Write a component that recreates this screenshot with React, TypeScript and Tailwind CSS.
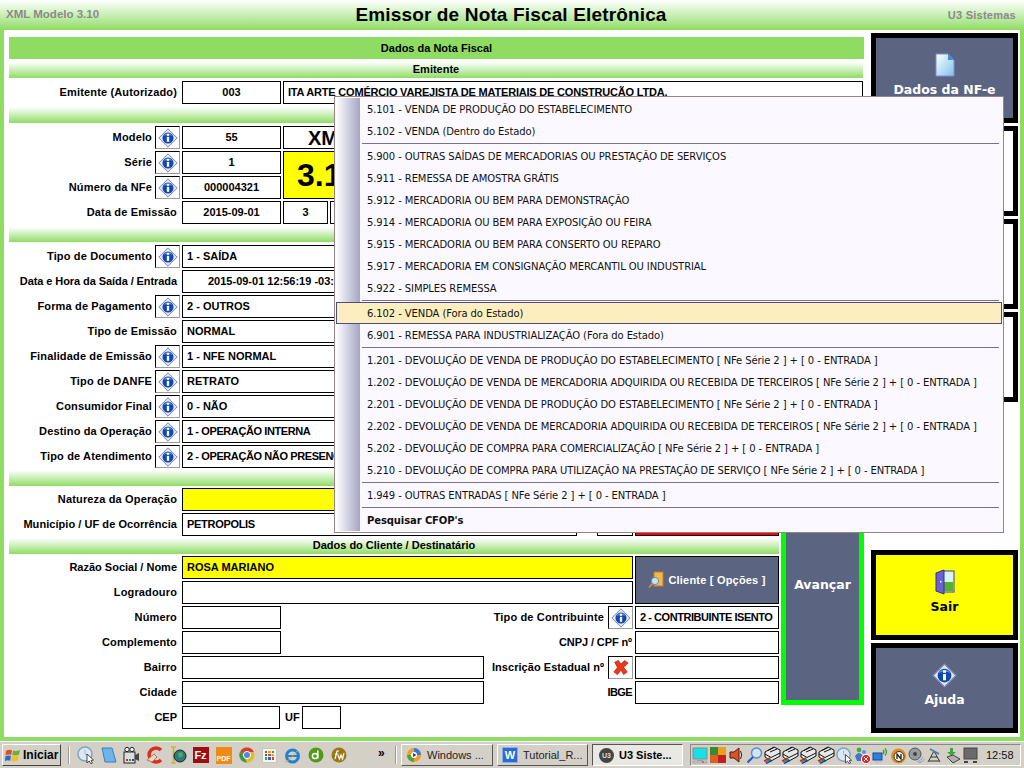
import type { ReactNode } from "react";

const sans = "font-['Liberation_Sans',Arial,sans-serif]";

function InfoIcon({ size = 20 }: { size?: number }) {
  return (
    <svg width={size} height={size} viewBox="0 0 24 24">
      <path d="M12 1 L23 12 L12 23 L1 12 Z" fill="#dfe5f2" stroke="#8088a4" strokeWidth="1.2" />
      <circle cx="12" cy="12" r="6.6" fill="#0f48b0" />
      <path d="M6.5 9.5 A6.4 6.4 0 0 1 17.5 9.5 Q12 7.5 6.5 9.5 Z" fill="#5d8fe0" />
      <rect x="10.6" y="10.6" width="2.8" height="6" fill="#fff" />
      <rect x="10.6" y="7" width="2.8" height="2.4" fill="#fff" />
    </svg>
  );
}

function IconButton({ children }: { children?: ReactNode }) {
  return (
    <div className="w-[25px] h-[23px] bg-white border border-black border-r-[#9a9a9a] border-b-[#9a9a9a] flex items-center justify-center shrink-0">
      {children ?? <InfoIcon />}
    </div>
  );
}

function RedX() {
  return (
    <svg width="16" height="17" viewBox="0 0 18 18">
      <path d="M2 3 L6 1 L9 5 L13 1 L17 4 L12 9 L16 14 L12 17 L9 12 L5 17 L1 14 L5 9 Z" fill="#e8391c" stroke="#b02010" strokeWidth="0.8" />
    </svg>
  );
}

function Box({ w, className = "", children }: { w: string; className?: string; children?: ReactNode }) {
  return (
    <div className={`${w} h-[23px] shrink-0 border border-black flex items-center px-1 font-bold text-[11px] text-black whitespace-nowrap overflow-hidden ${className || "bg-white"}`}>
      {children}
    </div>
  );
}

function Row({ label, info, labelClass = "tracking-[0.15px]", children }: { label: string; info?: boolean; labelClass?: string; children: ReactNode }) {
  return (
    <div className="flex h-[23px] items-center">
      <div className={`${info ? "w-[143px]" : "w-[168px]"} text-right font-bold text-[11px] text-black whitespace-nowrap ${labelClass}`}>{label}</div>
      {info ? (
        <div className="ml-[3px] mr-[2px]">
          <IconButton />
        </div>
      ) : (
        <div className="w-[5px]" />
      )}
      {children}
    </div>
  );
}

function Bar({ children, className = "h-[16px]" }: { children?: ReactNode; className?: string }) {
  return (
    <div className={`bg-linear-to-b from-white to-[#8fdc62] flex items-center justify-center pb-px font-bold text-[11px] text-black ${className}`}>
      {children}
    </div>
  );
}

function DocIcon() {
  return (
    <svg width="20" height="24" viewBox="0 0 20 24">
      <defs>
        <linearGradient id="docg" x1="0" y1="0" x2="1" y2="1">
          <stop offset="0" stopColor="#ffffff" />
          <stop offset="1" stopColor="#7fc0ee" />
        </linearGradient>
      </defs>
      <path d="M1 1 H13 L19 7 V23 H1 Z" fill="url(#docg)" stroke="#7f8fd0" />
      <path d="M13 1 L19 7 H13 Z" fill="#3f8fe0" />
    </svg>
  );
}

function DoorIcon() {
  return (
    <svg width="20" height="26" viewBox="0 0 20 26">
      <rect x="7" y="2" width="12" height="21" fill="#d8f4f4" stroke="#3c3c9c" />
      <rect x="8" y="13" width="10" height="9" fill="#58b030" />
      <path d="M1 4 L9 1 V25 L1 22 Z" fill="#6a60d8" stroke="#30308c" />
      <rect x="5" y="12" width="1.5" height="1.5" fill="#fff" />
    </svg>
  );
}

function ClientIcon() {
  return (
    <svg width="16" height="18" viewBox="0 0 16 18">
      <rect x="6" y="1" width="9" height="14" fill="#f2b84a" stroke="#c08020" />
      <circle cx="7" cy="10" r="3.6" fill="#bfe4f8" stroke="#7a8aa0" />
      <path d="M4.5 12.5 L1 16.5" stroke="#d89040" strokeWidth="1.6" />
    </svg>
  );
}

function SideButton({ className = "", icon, label, text = "text-white", mt = "" }: { className?: string; icon?: ReactNode; label?: string; text?: string; mt?: string }) {
  return (
    <div className={`w-[147px] h-[90px] border-[5px] border-black flex flex-col items-center pt-[14px] ${className} ${mt}`}>
      <div className="h-[26px] flex items-center">{icon}</div>
      {label && <div className={`mt-[3px] font-['DejaVu_Sans',sans-serif] font-bold text-[12.5px] ${text}`}>{label}</div>}
    </div>
  );
}

const menu: (string | null)[] = [
  "5.101 - VENDA DE PRODUÇÃO DO ESTABELECIMENTO",
  "5.102 - VENDA (Dentro do Estado)",
  null,
  "5.900 - OUTRAS SAÍDAS DE MERCADORIAS OU PRESTAÇÃO DE SERVIÇOS",
  "5.911 - REMESSA DE AMOSTRA GRÁTIS",
  "5.912 - MERCADORIA OU BEM PARA DEMONSTRAÇÃO",
  "5.914 - MERCADORIA OU BEM PARA EXPOSIÇÃO OU FEIRA",
  "5.915 - MERCADORIA OU BEM PARA CONSERTO OU REPARO",
  "5.917 - MERCADORIA EM CONSIGNAÇÃO MERCANTIL OU INDUSTRIAL",
  "5.922 - SIMPLES REMESSA",
  null,
  "6.102 - VENDA (Fora do Estado)",
  "6.901 - REMESSA PARA INDUSTRIALIZAÇÃO (Fora do Estado)",
  null,
  "1.201 - DEVOLUÇÃO DE VENDA DE PRODUÇÃO DO ESTABELECIMENTO [ NFe Série 2 ] + [ 0 - ENTRADA ]",
  "1.202 - DEVOLUÇÃO DE VENDA DE MERCADORIA ADQUIRIDA OU RECEBIDA DE TERCEIROS [ NFe Série 2 ] + [ 0 - ENTRADA ]",
  "2.201 - DEVOLUÇÃO DE VENDA DE PRODUÇÃO DO ESTABELECIMENTO [ NFe Série 2 ] + [ 0 - ENTRADA ]",
  "2.202 - DEVOLUÇÃO DE VENDA DE MERCADORIA ADQUIRIDA OU RECEBIDA DE TERCEIROS [ NFe Série 2 ] + [ 0 - ENTRADA ]",
  "5.202 - DEVOLUÇÃO DE COMPRA PARA COMERCIALIZAÇÃO [ NFe Série 2 ] + [ 0 - ENTRADA ]",
  "5.210 - DEVOLUÇÃO DE COMPRA PARA UTILIZAÇÃO NA PRESTAÇÃO DE SERVIÇO [ NFe Série 2 ] + [ 0 - ENTRADA ]",
  null,
  "1.949 - OUTRAS ENTRADAS [ NFe Série 2 ] + [ 0 - ENTRADA ]",
  null,
];

function Menu() {
  return (
    <div className="absolute left-[334px] top-[96px] w-[670px] h-[437px] border border-[#958585] bg-[#fbf9ff] p-px flex font-['DejaVu_Sans',sans-serif] text-[10px] tracking-[-0.1px] text-[#111]">
      <div className="w-[24px] shrink-0 bg-linear-to-r from-white to-[#a5a5c5]" />
      <div className="flex-1 flex flex-col">
        {menu.map((item, i) =>
          item === null ? (
            <div key={i} className="h-[3px] shrink-0 flex items-center pl-[2px] pr-[3px]">
              <div className="h-px w-full bg-[#7a7090]" />
            </div>
          ) : item.startsWith("6.102") ? (
            <div key={i} className="h-[22px] shrink-0 -ml-[24px] relative flex items-center pl-[30px] bg-[#fdeebf] border border-[#4a5078]">
              {item}
            </div>
          ) : (
            <div key={i} className="h-[22px] shrink-0 flex items-center pl-[7px] whitespace-nowrap">
              {item}
            </div>
          )
        )}
        <div className="h-[22px] shrink-0 flex items-center pl-[7px] font-bold">Pesquisar CFOP's</div>
      </div>
    </div>
  );
}

function ClockCursor({ s = 18 }: { s?: number }) {
  return (
    <svg width={s} height={s} viewBox="0 0 18 18">
      <circle cx="8" cy="8" r="7" fill="#dce8f2" stroke="#7aa4c8" strokeWidth="1.5" />
      <path d="M8 3.5 V8 L11 10" fill="none" stroke="#9ab8d0" />
      <path d="M10 8 V17 L12.2 15 L14 17.8 L15.4 17 L14 14.4 L16.5 14 Z" fill="#fff" stroke="#222" strokeWidth="0.8" />
    </svg>
  );
}

const PrinterIcon = () => (
  <svg width="18" height="18" viewBox="0 0 18 18">
    <path d="M2 6 L11 1 L17 4 L17 10 L8 15 L2 11 Z" fill="#e8e8e8" stroke="#111" />
    <path d="M5 4.5 L11 1.5 M7 6 L14 3 M2 8 L8 11.5 L17 7" fill="none" stroke="#111" />
    <path d="M1 15 L7 12" stroke="#e02020" strokeWidth="1.5" />
    <path d="M2 16.2 L8 13.2" stroke="#20a020" strokeWidth="1.5" />
    <path d="M3 17.4 L9 14.4" stroke="#2030d0" strokeWidth="1.5" />
  </svg>
);

const quickIcons: ReactNode[] = [
  <ClockCursor key="a" />,
  <svg key="b" width="16" height="17" viewBox="0 0 16 17"><path d="M1 1 H11 L15 15 H4 Z" fill="#6db4e8" stroke="#3a80b8" /></svg>,
  <svg key="c" width="17" height="18" viewBox="0 0 17 18"><rect x="1" y="6" width="11" height="11" fill="#ddd" stroke="#222" /><circle cx="4" cy="3.5" r="2.2" fill="#eee" stroke="#222" /><circle cx="9" cy="3.5" r="2.2" fill="#eee" stroke="#222" /><path d="M12 9 L16 7 V15 L12 13 Z" fill="#444" /><rect x="3" y="13" width="2" height="2" fill="#e02020" /><rect x="6" y="13" width="2" height="2" fill="#20a040" /><rect x="9" y="13" width="2" height="2" fill="#2040d0" /></svg>,
  <svg key="d" width="18" height="18" viewBox="0 0 18 18"><path d="M15 4 A7 7 0 1 0 15 14" fill="none" stroke="#d83020" strokeWidth="3.5" /><path d="M1 14 L8 8 L11 11 L6 16 Z" fill="#f0d8b0" stroke="#a08060" /></svg>,
  <svg key="e" width="18" height="18" viewBox="0 0 18 18"><path d="M2 1 H7 M4.5 1 V17 M2 17 H7" stroke="#c8b820" strokeWidth="1.6" fill="none" /><circle cx="11" cy="10" r="6" fill="#2a7a80" stroke="#222" /><path d="M9 7 L13 6 L14 10 L10 12 Z" fill="#58a858" /></svg>,
  <div key="f" className="w-[16px] h-[16px] bg-[#a00d10] text-white text-[11px] leading-[16px] font-bold text-center font-['Liberation_Sans',sans-serif]">Fz</div>,
  <div key="g" className="w-[16px] h-[17px] bg-[#ef8a14] text-white text-[7px] leading-[8px] pt-[8px] font-bold text-center font-['Liberation_Sans',sans-serif]">PDF</div>,
  <svg key="h" width="16" height="16" viewBox="0 0 16 16"><circle cx="8" cy="8" r="7.5" fill="#e8b820" /><path d="M8 .5 A7.5 7.5 0 0 1 14.8 5 H8 Z M1.5 4 A7.5 7.5 0 0 1 8 .5 L8 5 L5 9 Z" fill="#d83a2a" /><path d="M1.5 4 L5 10 L8 15.5 A7.5 7.5 0 0 1 1.5 4 Z" fill="#3a9a40" /><circle cx="8" cy="8" r="3.6" fill="#4a8ae0" stroke="#fff" /></svg>,
  <div key="i" className="w-[15px] h-[15px] bg-[#f4f4f0] border border-[#c8c8c0] grid grid-cols-3 gap-px p-[2px]">
    <i className="bg-[#e04020]" /><i className="bg-[#f0a020]" /><i className="bg-[#40a040]" /><i className="bg-[#2060d0]" /><i className="bg-[#e04020]" /><i className="bg-[#f0a020]" /><i className="bg-[#40a040]" /><i className="bg-[#2060d0]" /><i className="bg-[#e04020]" />
  </div>,
  <svg key="j" width="17" height="17" viewBox="0 0 17 17"><circle cx="8.5" cy="9" r="6" fill="none" stroke="#1f80d8" strokeWidth="3" /><rect x="3" y="8" width="11" height="2" fill="#1f80d8" /><path d="M1 15 Q4 15 14 3" fill="none" stroke="#e0b030" strokeWidth="1" /></svg>,
  <svg key="k" width="16" height="16" viewBox="0 0 16 16"><circle cx="8" cy="8" r="7.5" fill="#4f9a18" /><circle cx="7" cy="9" r="2.6" fill="none" stroke="#fff" strokeWidth="1.5" /><path d="M9.8 3.5 V11.5" stroke="#fff" strokeWidth="1.5" /></svg>,
  <svg key="l" width="16" height="16" viewBox="0 0 16 16"><circle cx="8" cy="8" r="7.5" fill="#9a7614" /><path d="M4 12 L6 4 H8 M4 7 H7.5 M7 8 L8.5 12 L10 8 L11.5 12 L13 6" fill="none" stroke="#fff" strokeWidth="1.2" /></svg>,
];

const trayIcons: ReactNode[] = [
  <svg key="a" width="16" height="17" viewBox="0 0 16 17"><rect x="1" y="1" width="14" height="11" fill="#18e0e8" stroke="#888" /><rect x="5" y="12" width="6" height="2" fill="#aaa" /><rect x="1" y="14" width="14" height="2" fill="#c8c8c8" stroke="#888" strokeWidth=".5" /><rect x="10" y="14.5" width="2" height="1" fill="#e02020" /></svg>,
  <svg key="b" width="16" height="16" viewBox="0 0 16 16"><rect x="0" y="0" width="8" height="8" fill="#3a8a30" /><rect x="8" y="0" width="8" height="8" fill="#e8a020" /><rect x="0" y="8" width="8" height="8" fill="#e06020" /><rect x="8" y="8" width="8" height="8" fill="#c02020" /></svg>,
  <svg key="c" width="15" height="16" viewBox="0 0 15 16"><path d="M1 5 H5 L10 1 V15 L5 11 H1 Z" fill="#e05028" stroke="#402010" /><path d="M11.5 4 Q14 8 11.5 12" fill="none" stroke="#402010" /></svg>,
  <svg key="d" width="17" height="17" viewBox="0 0 17 17"><circle cx="10.5" cy="6" r="5" fill="#cfe6fa" stroke="#5a8ad0" strokeWidth="1.4" /><path d="M7 10 L1.5 15.5" stroke="#3058c0" strokeWidth="2.2" /></svg>,
  <PrinterIcon key="e" />,
  <PrinterIcon key="f" />,
  <PrinterIcon key="g" />,
  <PrinterIcon key="h" />,
  <ClockCursor key="i" s={17} />,
  <svg key="j" width="17" height="17" viewBox="0 0 17 17"><circle cx="5" cy="3" r="2.4" fill="#48a848" /><path d="M1 9 Q5 3 9 9 L7 14 H3 Z" fill="#3a78c8" /><circle cx="10" cy="5" r="2" fill="#5898d8" /><circle cx="12" cy="12" r="4.6" fill="#e02828" stroke="#fff" /><path d="M10 10 L14 14 M14 10 L10 14" stroke="#fff" /></svg>,
  <svg key="k" width="17" height="17" viewBox="0 0 17 17"><rect x="1" y="6" width="9" height="7" fill="#2f80e0" stroke="#1a4a90" /><rect x="3" y="14" width="7" height="2" fill="#b8c8d8" /><path d="M11 3 Q13 5 11 7 M13 1.5 Q16 5 13 8.5" fill="none" stroke="#28a028" strokeWidth="1.2" /></svg>,
  <svg key="l" width="17" height="17" viewBox="0 0 17 17"><circle cx="8.5" cy="9" r="7.5" fill="#e88a18" /><circle cx="9" cy="9.5" r="5" fill="#f4f0e4" stroke="#333" /><path d="M7 12 V7 L11 12 V7" fill="none" stroke="#222" strokeWidth="1.3" /></svg>,
  <svg key="m" width="17" height="17" viewBox="0 0 17 17"><circle cx="7" cy="7" r="6" fill="#9a9a9a" stroke="#555" /><circle cx="7" cy="7" r="2" fill="#444" /><path d="M9 15 Q13 14 15 10 M11 16 Q15 15 16.5 12" fill="none" stroke="#8a98d0" /></svg>,
  <svg key="n" width="17" height="16" viewBox="0 0 17 16"><path d="M8 4 L2 15 M8 4 L14 15 M5 10 H11 M3 14 H13" fill="none" stroke="#333" /><path d="M4 2 L13 7" stroke="#5a78b0" strokeWidth="2" /></svg>,
  <svg key="o" width="17" height="17" viewBox="0 0 17 17"><path d="M6 1 V5 H3 L7.5 9 L12 5 H9 V1 Z" fill="#3aa83a" /><path d="M3 10 L9 8 L16 12 L9 16 Z" fill="#b0b0b0" stroke="#444" /></svg>,
  <svg key="p" width="15" height="17" viewBox="0 0 15 17"><rect x="1" y="1" width="13" height="11" fill="#6a6a6a" stroke="#444" /><rect x="1" y="14" width="4" height="2" fill="#444" /><rect x="10" y="14" width="4" height="2" fill="#444" /></svg>,
];

function TaskButton({ w, pressed, icon, label }: { w: string; pressed?: boolean; icon: ReactNode; label: string }) {
  return (
    <div
      className={`${w} h-[22px] shrink-0 flex items-center gap-[5px] pl-[4px] text-[11px] whitespace-nowrap border ${
        pressed
          ? "border-t-[#555] border-l-[#555] border-r-white border-b-white bg-[#eae8e2] font-bold text-black"
          : "border-t-white border-l-white border-r-[#555] border-b-[#555] text-[#222]"
      }`}
    >
      {icon}
      <span>{label}</span>
    </div>
  );
}

function Taskbar() {
  return (
    <div className={`h-[27px] bg-[#d4d0c8] border-t border-white flex items-center ${sans}`}>
      <div className="ml-[2px] w-[59px] h-[22px] flex items-center gap-[2px] pl-[2px] border border-t-white border-l-white border-r-[#444] border-b-[#444] font-bold text-[12px] text-black shrink-0">
        <svg width="16" height="15" viewBox="0 0 16 15">
          <path d="M1 3 Q4 1 7 2.5 L6.2 7 Q3.5 6 0.5 7.5 Z" fill="#e0501c" />
          <path d="M8 2.5 Q11 4 15 2 L14 6.8 Q10.5 8 7.2 7 Z" fill="#6cb030" />
          <path d="M0.3 8.5 Q3.5 7 6 8 L5.2 12.8 Q2.5 11.5 0 13 Z" fill="#2a68d8" />
          <path d="M7 8 Q10.5 9 13.8 7.8 L13 12.6 Q9.5 14 6.2 13 Z" fill="#f0c020" />
        </svg>
        Iniciar
      </div>
      <div className="ml-[7px] w-[2px] h-[18px] border-l border-[#999] bg-white shrink-0" />
      <div className="ml-[4px] w-[276px] flex shrink-0">
        {quickIcons.map((icon, i) => (
          <div key={i} className="w-[23px] flex justify-center items-center shrink-0">
            {icon}
          </div>
        ))}
      </div>
      <div className="ml-[28px] w-[12px] font-bold text-[12px] -mt-[4px] shrink-0">»</div>
      <div className="ml-[5px] w-[2px] h-[18px] border-l border-[#999] bg-white shrink-0" />
      <div className="ml-[4px] flex gap-[4px] items-center">
        <TaskButton
          w="w-[92px]"
          label="Windows ..."
          icon={
            <svg width="16" height="16" viewBox="0 0 16 16">
              <circle cx="8" cy="8" r="7" fill="#f0a020" />
              <path d="M8 1 A7 7 0 0 1 15 8 H8 Z" fill="#3a78d8" />
              <path d="M8 15 A7 7 0 0 1 1 8 H8 Z" fill="#48a838" />
              <circle cx="8" cy="8" r="3" fill="#fff" />
              <path d="M7 6 L10.5 8 L7 10 Z" fill="#2040a0" />
            </svg>
          }
        />
        <TaskButton
          w="w-[91px]"
          label="Tutorial_R..."
          icon={<div className="w-[16px] h-[16px] bg-[#2a6ad8] border border-[#8ab0e8] text-white font-bold text-[11px] leading-[14px] text-center">W</div>}
        />
        <TaskButton
          w="w-[91px]"
          pressed
          label="U3 Siste..."
          icon={<div className="w-[15px] h-[15px] rounded-full bg-[#444] text-[#ddd] font-bold text-[7px] leading-[15px] text-center ml-[2px]">U3</div>}
        />
      </div>
      <div className="ml-[7px] flex-1 h-[22px] mr-[3px] border border-t-[#888] border-l-[#888] border-r-white border-b-white flex items-center">
        {trayIcons.map((icon, i) => (
          <div key={i} className="w-[18px] flex justify-center items-center shrink-0">
            {icon}
          </div>
        ))}
        <div className="ml-[7px] text-[11px] text-[#111]">12:58</div>
      </div>
    </div>
  );
}

export default function App() {
  return (
    <div className={`relative w-[1024px] h-[768px] overflow-hidden flex flex-col bg-white ${sans}`}>
      <header className="h-[30px] shrink-0 bg-linear-to-b from-white to-[#8fdc62] flex items-center justify-between pl-[6px] pr-[8px]">
        <div className="w-[200px] font-bold text-[11.5px] text-[#8a8a8a]">XML Modelo 3.10</div>
        <div className="font-bold text-[19px] tracking-[0.15px] text-black">Emissor de Nota Fiscal Eletrônica</div>
        <div className="w-[200px] text-right font-bold text-[11px] tracking-[0.25px] text-[#8a8a8a]">U3 Sistemas</div>
      </header>

      <main className="h-[711px] shrink-0 border-x-4 border-b-4 border-[#8fdc62] bg-white flex items-start">
        <div className="ml-[5px] mt-[7px] w-[855px] shrink-0 flex flex-col">
          <div className="h-[22px] bg-[#8fdc62] flex items-center justify-center font-bold text-[11px] text-black">Dados da Nota Fiscal</div>
          <Bar className="h-[16px] mt-[3px] mr-px">Emitente</Bar>
          <div className="mt-[3px]">
            <Row label="Emitente (Autorizado)">
              <Box w="w-[99px]" className="bg-white justify-center">003</Box>
              <Box w="w-[580px]" className="bg-white ml-[2px] tracking-[-0.2px]">ITA ARTE COMÉRCIO VAREJISTA DE MATERIAIS DE CONSTRUÇÃO LTDA.</Box>
            </Row>
          </div>
          <Bar className="h-[16px] mt-[3px] mr-px" />

          <div className="mt-[3px] flex">
            <div className="flex flex-col gap-[2px]">
              <Row label="Modelo" info><Box w="w-[99px]" className="bg-white justify-center">55</Box></Row>
              <Row label="Série" info><Box w="w-[99px]" className="bg-white justify-center">1</Box></Row>
              <Row label="Número da NFe" info><Box w="w-[99px]" className="bg-white justify-center">000004321</Box></Row>
            </div>
            <div className="ml-[2px] flex-1 flex flex-col gap-[2px]">
              <div className="h-[23px] border border-black flex items-center pl-[24px] font-bold text-[20px]">XML</div>
              <div className="h-[48px] border border-black bg-[#ffff00] flex items-center pl-[13px] font-bold text-[32px]">3.10</div>
            </div>
          </div>
          <div className="mt-[2px]">
            <Row label="Data de Emissão">
              <Box w="w-[99px]" className="bg-white justify-center">2015-09-01</Box>
              <Box w="w-[45px]" className="bg-white justify-center ml-[2px]">3</Box>
              <Box w="w-[100px]" className="bg-white ml-[2px]" />
            </Row>
          </div>
          <Bar className="h-[15px] mt-[3px] mr-px" />

          <div className="mt-[3px] flex">
            <div className="w-[770px] shrink-0 flex flex-col gap-[2px]">
              <Row label="Tipo de Documento" info><Box w="w-[597px]" className="bg-white">1 - SAÍDA</Box></Row>
              <Row label="Data e Hora da Saída / Entrada" labelClass="tracking-[-0.08px]"><Box w="w-[597px]" className="bg-white pl-[25px]">2015-09-01 12:56:19 -03:00</Box></Row>
              <Row label="Forma de Pagamento" info><Box w="w-[597px]" className="bg-white">2 - OUTROS</Box></Row>
              <Row label="Tipo de Emissão"><Box w="w-[597px]" className="bg-white">NORMAL</Box></Row>
              <Row label="Finalidade de Emissão" info><Box w="w-[597px]" className="bg-white">1 - NFE NORMAL</Box></Row>
              <Row label="Tipo de DANFE" info><Box w="w-[597px]" className="bg-white">RETRATO</Box></Row>
              <Row label="Consumidor Final" info><Box w="w-[597px]" className="bg-white">0 - NÃO</Box></Row>
              <Row label="Destino da Operação" info><Box w="w-[597px]" className="bg-white tracking-[-0.4px]">1 - OPERAÇÃO INTERNA</Box></Row>
              <Row label="Tipo de Atendimento" info><Box w="w-[597px]" className="bg-white tracking-[-0.4px]">2 - OPERAÇÃO NÃO PRESENCIAL</Box></Row>
              <Bar className="h-[16px]" />
              <Row label="Natureza da Operação"><Box w="w-[597px]" className="bg-[#ffff00]" /></Row>
              <Row label="Município / UF de Ocorrência" labelClass="tracking-[0.05px]">
                <Box w="w-[395px]" className="bg-white tracking-[-0.3px]">PETROPOLIS</Box>
                <Box w="w-[36px]" className="bg-white ml-[20px]" />
                <Box w="w-[144px]" className="bg-[#ff0000] ml-[2px]" />
              </Row>
              <Bar className="h-[16px]">Dados do Cliente / Destinatário</Bar>

              <div className="flex">
                <div className="flex flex-col gap-[2px]">
                  <Row label="Razão Social / Nome" labelClass=""><Box w="w-[451px]" className="bg-[#ffff00]">ROSA MARIANO</Box></Row>
                  <Row label="Logradouro"><Box w="w-[451px]" className="bg-white" /></Row>
                </div>
                <div className="ml-[2px] w-[144px] h-[48px] bg-[#5b6480] border border-black flex items-center justify-center gap-[4px] font-bold text-[11px] tracking-[0.2px] text-white">
                  <ClientIcon />
                  Cliente [ Opções ]
                </div>
              </div>

              <Row label="Número">
                <Box w="w-[99px]" className="bg-white" />
                <div className="w-[323px] text-right font-bold text-[11px] tracking-[0.15px]">Tipo de Contribuinte</div>
                <div className="ml-[4px] mr-[2px]"><IconButton /></div>
                <Box w="w-[144px]" className="bg-white tracking-[-0.45px]">2 - CONTRIBUINTE ISENTO</Box>
              </Row>
              <Row label="Complemento">
                <Box w="w-[99px]" className="bg-white" />
                <div className="w-[351px] text-right font-bold text-[11px] tracking-[-0.1px]">CNPJ / CPF nº</div>
                <Box w="w-[144px]" className="bg-white ml-[3px]" />
              </Row>
              <Row label="Bairro">
                <Box w="w-[302px]" className="bg-white" />
                <div className="w-[120px] text-right font-bold text-[11px] tracking-[0.05px]">Inscrição Estadual nº</div>
                <div className="ml-[4px] mr-[2px]"><IconButton><RedX /></IconButton></div>
                <Box w="w-[144px]" className="bg-white" />
              </Row>
              <Row label="Cidade">
                <Box w="w-[302px]" className="bg-white" />
                <div className="w-[148px] text-right font-bold text-[11px] tracking-[-0.6px]">IBGE</div>
                <Box w="w-[144px]" className="bg-white ml-[3px]" />
              </Row>
              <Row label="CEP" labelClass="">
                <Box w="w-[98px]" className="bg-white" />
                <div className="ml-[5px] w-[14px] font-bold text-[11px]">UF</div>
                <Box w="w-[39px]" className="bg-white ml-[3px]" />
              </Row>
            </div>
            <div className="ml-[2px] mt-[220px] w-[83px] h-[240px] bg-[#5b6480] border-[5px] border-[#00ff00] flex items-center justify-center font-['DejaVu_Sans',sans-serif] font-bold text-[12.5px] text-white">
              Avançar
            </div>
          </div>
        </div>

        <aside className="ml-[7px] mt-[3px] w-[147px] shrink-0 flex flex-col">
          <SideButton className="bg-[#5b6480]" icon={<DocIcon />} label="Dados da NF-e" />
          <SideButton className="bg-white" mt="mt-[3px]" />
          <SideButton className="bg-white" mt="mt-[3px]" />
          <SideButton className="bg-white" mt="mt-[3px]" />
          <SideButton className="bg-[#ffff00]" mt="mt-[148px]" icon={<DoorIcon />} label="Sair" text="text-black" />
          <SideButton className="bg-[#5b6480]" mt="mt-[3px]" icon={<InfoIcon size={25} />} label="Ajuda" />
        </aside>
      </main>

      <Taskbar />
      <Menu />
    </div>
  );
}
